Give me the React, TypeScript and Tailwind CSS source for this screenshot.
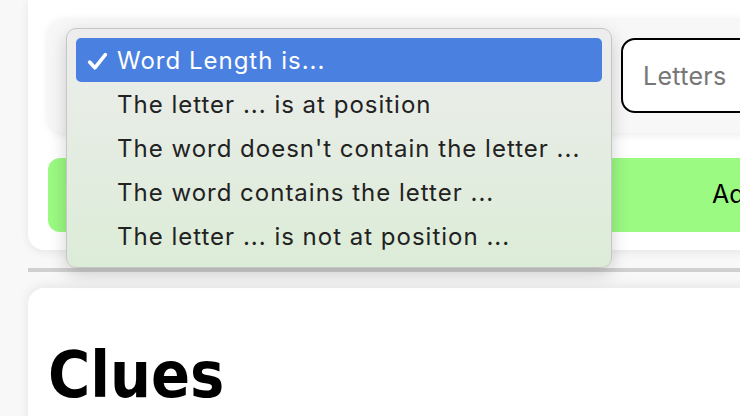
const options = [
    'Word Length is...',
    'The letter ... is at position',
    "The word doesn't contain the letter ...",
    'The word contains the letter ...',
    'The letter ... is not at position ...',
];

const CheckMark = () => (
    <svg width="21" height="21" viewBox="0 0 20 20" fill="none">
        <path d="M2.5 10.5 L7.5 16 L17.5 3.5" stroke="currentColor" strokeWidth="3.4" strokeLinecap="round" strokeLinejoin="round" />
    </svg>
);

const App = () => {
    const selected = 0;

    return (
        <div className="min-h-screen bg-[#f8f8f8] pl-[28px] overflow-hidden font-['Inter',sans-serif]">
            <div className="relative w-[760px]">
                {/* add clue card */}
                <div className="bg-white rounded-b-2xl shadow-[0_2px_10px_rgba(0,0,0,0.08)] px-[20px] pt-[18px] pb-[18px]">
                    <div className="flex items-center gap-[20px] bg-[#f7f7f7] rounded-2xl shadow-[0_2px_8px_rgba(0,0,0,0.08)] px-[20px] py-[20px]">
                        <div className="w-[533px] h-[75px] shrink-0" />
                        <input
                            placeholder="Letters"
                            className="w-[160px] shrink-0 h-[75px] border-2 border-black rounded-[14px] bg-white px-[20px] text-[25px] tracking-[0.3px] placeholder:text-[#777] outline-none"
                        />
                    </div>
                    <button className="mt-[25px] w-full h-[74px] bg-[#9bfa82] rounded-xl text-[25px] text-black text-left pl-[664px]">
                        Add
                    </button>
                </div>

                <hr className="mt-[18px] border-0 h-[4px] bg-[#d0d0d0]" />

                {/* clues card */}
                <div className="mt-[16px] bg-white rounded-t-2xl shadow-[0_-2px_12px_rgba(0,0,0,0.08)] px-[20px] pt-[55px] h-[200px]">
                    <h1 className="text-[64px] leading-none font-bold text-black font-['DejaVu_Sans_Condensed','DejaVu_Sans',sans-serif]">
                        Clues
                    </h1>
                </div>

                {/* open select menu */}
                <div className="absolute left-[38px] top-[28px] w-[546px] rounded-[10px] border border-[#c6c6c6] bg-gradient-to-b from-[#ededed] to-[#dcecd7] shadow-[0_6px_18px_rgba(0,0,0,0.18)] p-[9px]">
                    {options.map((opt, i) => (
                        <div
                            key={opt}
                            className={`flex items-center h-[44px] pt-[2px] rounded-[5px] text-[24px] tracking-[1px] ${i === selected ? 'bg-[#4a80e0] text-white' : 'text-[#222]'}`}
                        >
                            <span className="w-[41px] flex justify-end pr-[9px]">
                                {i === selected && <CheckMark />}
                            </span>
                            <span>{opt}</span>
                        </div>
                    ))}
                </div>
            </div>
        </div>
    );
};

export default App;
